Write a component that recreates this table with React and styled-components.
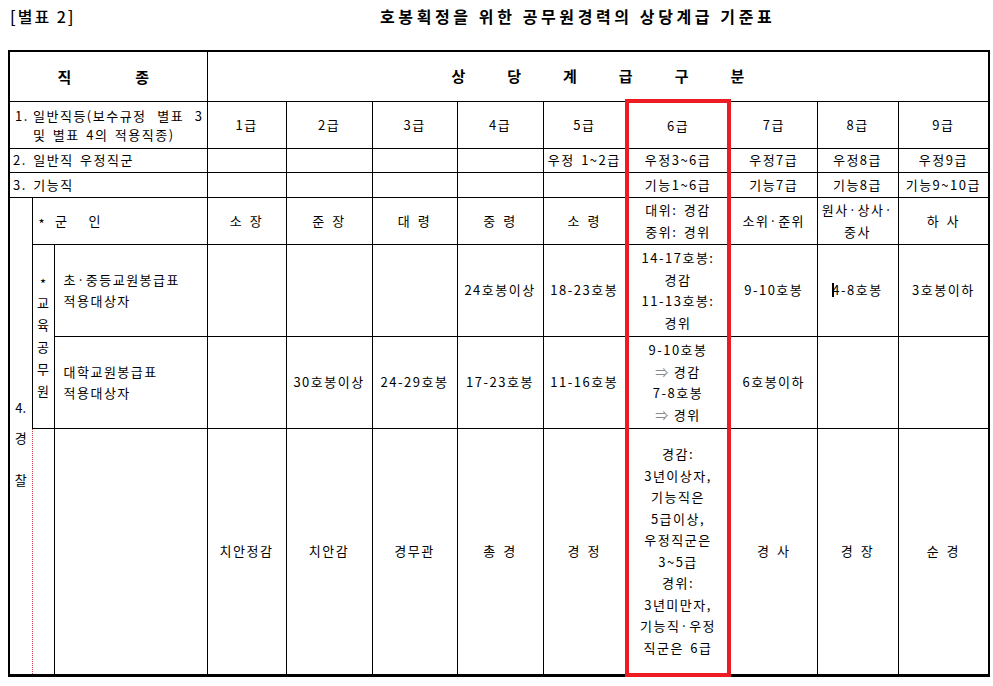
import styled, { createGlobalStyle, css } from "styled-components";

const GlobalStyle = createGlobalStyle`
  html, body {
    margin: 0;
    background: #fff;
  }
  body {
    font-family: "Noto Sans CJK KR", "Noto Sans", sans-serif;
    color: #000;
  }
`;

const RED = "#ed1c24";

const Page = styled.div`
  width: 993px;
  height: 686px;
  padding-left: 8px;
  box-sizing: border-box;
`;

const Heading = styled.div`
  display: grid;
  grid-template-columns: 370px 1fr;
  align-items: center;
  height: 32px;
  padding-left: 2px;
  margin-bottom: 18px;
`;

const Annex = styled.span`
  font-size: 16px;
  font-weight: 500;
  letter-spacing: 2px;
`;

const Title = styled.span`
  font-size: 16px;
  font-weight: 700;
  letter-spacing: 3.6px;
`;

const Sheet = styled.table`
  border-collapse: collapse;
  table-layout: fixed;
  width: 982px;
  border: 2px solid #000;
  border-bottom-width: 3px;
  font-size: 13px;
  line-height: 21.5px;
  letter-spacing: 1.5px;
  word-spacing: 2px;
`;

const Row = styled.tr`
  height: ${(p) => p.$h}px;
`;

const Cell = styled.td`
  border: 1px solid #000;
  padding: 0 2px;
  text-align: ${(p) => (p.$left ? "left" : "center")};
  vertical-align: middle;
  white-space: nowrap;
  ${(p) =>
    p.$indent &&
    css`
      padding-left: ${p.$indent}px;
    `}
  ${(p) =>
    p.$dotted &&
    css`
      border-left: 1px dotted #c8404a;
    `}
  ${(p) =>
    p.$openRight &&
    css`
      border-right: none;
      padding-top: 16px;
    `}
  ${(p) =>
    p.$mark &&
    css`
      border-left: 4px solid ${RED};
      border-right: 4px solid ${RED};
    `}
  ${(p) =>
    p.$mark === "top" &&
    css`
      border-top: 4px solid ${RED};
    `}
  ${(p) =>
    p.$mark === "bottom" &&
    css`
      border-bottom: 4px solid ${RED};
    `}
`;

const Spread = styled.div`
  display: flex;
  justify-content: center;
  gap: ${(p) => p.$gap}px;
  font-size: 15px;
  font-weight: 700;
  letter-spacing: 0;
  padding-right: ${(p) => p.$shift || 0}px;
`;

const Numbered = styled.div`
  display: grid;
  grid-template-columns: 18px 1fr;
  line-height: 19px;
`;

const JustText = styled.span`
  text-align: justify;
  text-align-last: justify;
  padding-right: 1px;
`;

const Label = styled.div`
  display: flex;
  align-items: center;
`;

const Star = styled.span`
  font-size: 13px;
  line-height: 13px;
  padding-top: 6px;
  margin-right: 9px;
`;

const Word = styled.span`
  margin-left: ${(p) => p.$gap || 0}px;
`;

const Stack = styled.div`
  display: flex;
  flex-direction: column;
  align-items: center;
  letter-spacing: 0;
  line-height: ${(p) => p.$lh || 21.5}px;
`;

const Gap = styled.span`
  margin-top: ${(p) => p.$m}px;
`;

const SmallStar = styled.span`
  font-size: 13px;
  padding-top: 5px;
  line-height: 17px;
`;

const Arrow = styled.span`
  color: #8a8a8a;
  margin-right: 4px;
`;

const Caret = styled.span`
  display: inline-block;
  width: 2px;
  height: 14px;
  background: #000;
  vertical-align: -2px;
  margin-right: -2px;
`;

const widths = [23, 22, 153, 79, 86, 85, 86, 84, 102, 88, 81, 91];

const lines = (arr) => arr.map((t, i) => <div key={i}>{t}</div>);

function GradeCells({ items, mark }) {
  return items.map((v, i) => (
    <Cell key={i} $mark={i === 5 ? mark : undefined}>
      {v}
    </Cell>
  ));
}

export default function App() {
  return (
    <Page>
      <GlobalStyle />
      <Heading>
        <Annex>[별표 2]</Annex>
        <Title>호봉획정을 위한 공무원경력의 상당계급 기준표</Title>
      </Heading>
      <Sheet>
        <colgroup>
          {widths.map((w, i) => (
            <col key={i} style={{ width: w }} />
          ))}
        </colgroup>
        <tbody>
          <Row $h={50}>
            <Cell colSpan={3}>
              <Spread $gap={64} $shift={10}>
                <span>직</span>
                <span>종</span>
              </Spread>
            </Cell>
            <Cell colSpan={9}>
              <Spread $gap={42}>
                {["상", "당", "계", "급", "구", "분"].map((c) => (
                  <span key={c}>{c}</span>
                ))}
              </Spread>
            </Cell>
          </Row>
          <Row $h={47}>
            <Cell colSpan={3} $left $indent={5}>
              <Numbered>
                <span>1.</span>
                <JustText>일반직등(보수규정 별표 3</JustText>
                <span />
                <span>및 별표 4의 적용직종)</span>
              </Numbered>
            </Cell>
            <GradeCells
              mark="top"
              items={["1급", "2급", "3급", "4급", "5급", "6급", "7급", "8급", "9급"]}
            />
          </Row>
          <Row $h={24}>
            <Cell colSpan={3} $left $indent={3}>
              2. 일반직 우정직군
            </Cell>
            <GradeCells
              mark="mid"
              items={["", "", "", "", "우정 1~2급", "우정3~6급", "우정7급", "우정8급", "우정9급"]}
            />
          </Row>
          <Row $h={25}>
            <Cell colSpan={3} $left $indent={3}>
              3. 기능직
            </Cell>
            <GradeCells
              mark="mid"
              items={["", "", "", "", "", "기능1~6급", "기능7급", "기능8급", "기능9~10급"]}
            />
          </Row>
          <Row $h={47}>
            <Cell rowSpan={4} $openRight>
              <Stack $lh={21}>
                <span>4.</span>
                <Gap $m={9}>경</Gap>
                <Gap $m={21}>찰</Gap>
              </Stack>
            </Cell>
            <Cell colSpan={2} $left $indent={6}>
              <Label>
                <Star>*</Star>
                <Word>군</Word>
                <Word $gap={20}>인</Word>
              </Label>
            </Cell>
            <GradeCells
              mark="mid"
              items={[
                "소 장",
                "준 장",
                "대 령",
                "중 령",
                "소 령",
                lines(["대위: 경감", "중위: 경위"]),
                "소위·준위",
                lines(["원사·상사·", "중사"]),
                "하 사",
              ]}
            />
          </Row>
          <Row $h={92}>
            <Cell rowSpan={2}>
              <Stack $lh={22}>
                <SmallStar>*</SmallStar>
                {["교", "육", "공", "무", "원"].map((c) => (
                  <span key={c}>{c}</span>
                ))}
              </Stack>
            </Cell>
            <Cell $left $indent={9}>
              {lines(["초·중등교원봉급표", "적용대상자"])}
            </Cell>
            <GradeCells
              mark="mid"
              items={[
                "",
                "",
                "",
                "24호봉이상",
                "18-23호봉",
                lines(["14-17호봉:", "경감", "11-13호봉:", "경위"]),
                "9-10호봉",
                <>
                  <Caret />
                  4-8호봉
                </>,
                "3호봉이하",
              ]}
            />
          </Row>
          <Row $h={92}>
            <Cell $left $indent={9}>
              {lines(["대학교원봉급표", "적용대상자"])}
            </Cell>
            <GradeCells
              mark="mid"
              items={[
                "",
                "30호봉이상",
                "24-29호봉",
                "17-23호봉",
                "11-16호봉",
                lines([
                  "9-10호봉",
                  <>
                    <Arrow>⇒</Arrow>경감
                  </>,
                  "7-8호봉",
                  <>
                    <Arrow>⇒</Arrow>경위
                  </>,
                ]),
                "6호봉이하",
                "",
                "",
              ]}
            />
          </Row>
          <Row $h={247}>
            <Cell $dotted />
            <Cell $dotted />
            <GradeCells
              mark="bottom"
              items={[
                "치안정감",
                "치안감",
                "경무관",
                "총 경",
                "경 정",
                lines([
                  "경감:",
                  "3년이상자,",
                  "기능직은",
                  "5급이상,",
                  "우정직군은",
                  "3~5급",
                  "경위:",
                  "3년미만자,",
                  "기능직·우정",
                  "직군은 6급",
                ]),
                "경 사",
                "경 장",
                "순 경",
              ]}
            />
          </Row>
        </tbody>
      </Sheet>
    </Page>
  );
}
